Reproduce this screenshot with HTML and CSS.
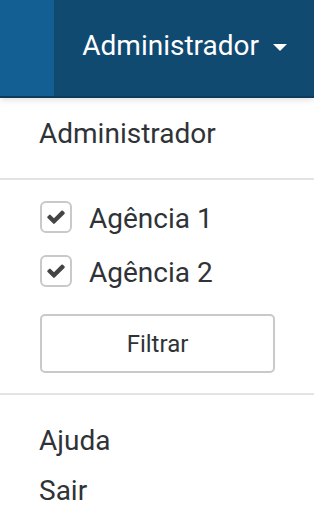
FILE: index.html
```html
<!DOCTYPE html>
<html lang="pt">
<head>
<meta charset="utf-8">
<title>Menu</title>
<link rel="stylesheet" href="styles.css">
</head>
<body>
<header class="topbar">
  <div class="side"></div>
  <div class="user">
    <span class="user-name">Administrador</span>
    <span class="caret"></span>
  </div>
</header>
<nav class="menu">
  <section class="sec sec-head">
    <div class="item">Administrador</div>
  </section>
  <section class="sec sec-filter">
    <label class="check-row">
      <span class="box"><svg viewBox="121 290 1550 1240" width="18" height="14"><path fill="#444" d="M1671 566q0 40-28 68l-724 724-136 136q-28 28-68 28t-68-28l-136-136-362-362q-28-28-28-68t28-68l136-136q28-28 68-28t68 28l294 295 656-657q28-28 68-28t68 28l136 136q28 28 28 68z"/></svg></span>
      <span class="check-label">Agência 1</span>
    </label>
    <label class="check-row">
      <span class="box"><svg viewBox="121 290 1550 1240" width="18" height="14"><path fill="#444" d="M1671 566q0 40-28 68l-724 724-136 136q-28 28-68 28t-68-28l-136-136-362-362q-28-28-28-68t28-68l136-136q28-28 68-28t68 28l294 295 656-657q28-28 68-28t68 28l136 136q28 28 28 68z"/></svg></span>
      <span class="check-label">Agência 2</span>
    </label>
    <button class="btn" type="button">Filtrar</button>
  </section>
  <section class="sec sec-links">
    <a class="link">Ajuda</a>
    <a class="link">Sair</a>
  </section>
</nav>
</body>
</html>
```

FILE: styles.css
```css
html, body {
  margin: 0;
  padding: 0;
  background: #fff;
}
body {
  width: 314px;
  font-family: Roboto, "Liberation Sans", sans-serif;
  color: #2f3337;
}
.topbar {
  display: flex;
  height: 96px;
  border-bottom: 2px solid #0d3b59;
  position: relative;
  z-index: 1;
  box-shadow: 0 2px 6px rgba(0,0,0,0.12);
}
.side {
  width: 54px;
  background: #135f93;
}
.user {
  flex: 1;
  background: #114a71;
  display: flex;
  align-items: center;
  justify-content: flex-end;
  padding-right: 27px;
  padding-bottom: 4px;
  color: #fff;
}
.user-name {
  font-size: 28px;
  line-height: 32px;
}
.caret {
  width: 0;
  height: 0;
  margin-left: 14px;
  margin-top: 2px;
  border-left: 7px solid transparent;
  border-right: 7px solid transparent;
  border-top: 7px solid #fff;
}
.sec {
  padding-left: 39px;
  padding-right: 39px;
}
.sec-head {
  padding-top: 16px;
  padding-bottom: 24px;
  border-bottom: 2px solid #e3e3e3;
}
.item {
  font-size: 28px;
  line-height: 40px;
}
.sec-filter {
  padding-top: 20px;
  padding-bottom: 20px;
  display: flex;
  flex-direction: column;
  gap: 21px;
  border-bottom: 2px solid #e3e3e3;
}
.check-row {
  display: flex;
  align-items: center;
  gap: 17px;
  height: 33px;
  padding-left: 1px;
}
.box {
  box-sizing: border-box;
  width: 32px;
  height: 32px;
  border: 2px solid #c9c9c9;
  border-radius: 6px;
  display: flex;
  align-items: center;
  justify-content: center;
}
.box svg {
  display: block;
}
.check-label {
  font-size: 28px;
  line-height: 33px;
  padding-top: 4px;
}
.btn {
  box-sizing: border-box;
  margin-top: 6px;
  margin-left: 1px;
  width: 235px;
  height: 59px;
  border: 2px solid #c9c9c9;
  border-radius: 5px;
  background: #fff;
  font-family: Roboto, "Liberation Sans", sans-serif;
  font-size: 24px;
  color: #2f3337;
  padding: 0;
}
.sec-links {
  padding-top: 21px;
  display: flex;
  flex-direction: column;
}
.link {
  font-size: 28px;
  line-height: 50px;
  color: #2f3337;
}
```
